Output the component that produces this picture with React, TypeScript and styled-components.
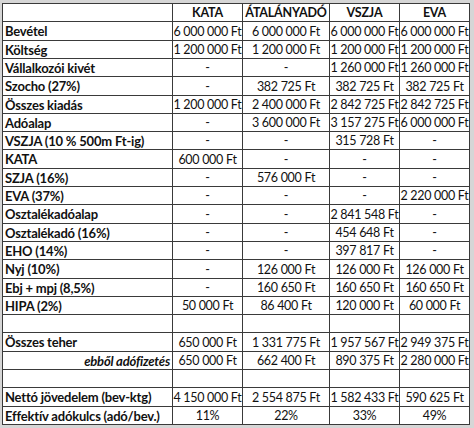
import React from "react";
import styled, { createGlobalStyle } from "styled-components";

const Global = createGlobalStyle`
  html, body { margin: 0; padding: 0; background: #d6d6d6; }
  body { width: 474px; height: 428px; overflow: hidden; }
`;

const Sheet = styled.div`
  margin: 3px 0 0 2px;
  display: grid;
  grid-template-columns: 170px 70px 87px 70px 70px;
  grid-template-rows: 18px 19px 18px 18px 19px 18px 18px 18px 19px 18px 18px 19px 18px 18px 19px 18px 18px 18px 19px 18px 18px 19px 18px;
  width: max-content;
  border-top: 1px solid #3a3a3a;
  border-left: 1px solid #3a3a3a;
  background: #ffffff;
  font-family: "Lato", "Liberation Sans", sans-serif;
  color: #111111;
`;

type Kind = "label" | "head" | "data" | "sub";

const Cell = styled.div<{ $kind: Kind }>`
  box-sizing: border-box;
  border-right: 1px solid #3a3a3a;
  border-bottom: 1px solid #3a3a3a;
  display: flex;
  align-items: center;
  white-space: nowrap;
  padding: ${(p) => (p.$kind === "label" || p.$kind === "sub" ? "0 2px" : "0")};
  font-size: ${(p) => (p.$kind === "data" ? "12.5px" : p.$kind === "head" ? "12.5px" : "13px")};
  letter-spacing: ${(p) => (p.$kind === "data" ? "-0.3px" : "-0.2px")};
  justify-content: ${(p) =>
    p.$kind === "label" ? "flex-start" : p.$kind === "sub" ? "flex-end" : "center"};
  font-weight: ${(p) => (p.$kind === "data" ? 400 : 700)};
  font-style: ${(p) => (p.$kind === "sub" ? "italic" : "normal")};
`;

type Row = { label: string; values: string[]; sub?: boolean; head?: boolean };

const rows: Row[] = [
  { label: "", values: ["KATA", "ÁTALÁNYADÓ", "VSZJA", "EVA"], head: true },
  { label: "Bevétel", values: ["6 000 000 Ft", "6 000 000 Ft", "6 000 000 Ft", "6 000 000 Ft"] },
  { label: "Költség", values: ["1 200 000 Ft", "1 200 000 Ft", "1 200 000 Ft", "1 200 000 Ft"] },
  { label: "Vállalkozói kivét", values: ["-", "-", "1 260 000 Ft", "1 260 000 Ft"] },
  { label: "Szocho (27%)", values: ["-", "382 725 Ft", "382 725 Ft", "382 725 Ft"] },
  { label: "Összes kiadás", values: ["1 200 000 Ft", "2 400 000 Ft", "2 842 725 Ft", "2 842 725 Ft"] },
  { label: "Adóalap", values: ["-", "3 600 000 Ft", "3 157 275 Ft", "6 000 000 Ft"] },
  { label: "VSZJA (10 % 500m Ft-ig)", values: ["-", "-", "315 728 Ft", "-"] },
  { label: "KATA", values: ["600 000 Ft", "-", "-", "-"] },
  { label: "SZJA (16%)", values: ["-", "576 000 Ft", "-", "-"] },
  { label: "EVA (37%)", values: ["-", "-", "-", "2 220 000 Ft"] },
  { label: "Osztalékadóalap", values: ["-", "-", "2 841 548 Ft", "-"] },
  { label: "Osztalékadó (16%)", values: ["-", "-", "454 648 Ft", "-"] },
  { label: "EHO (14%)", values: ["-", "-", "397 817 Ft", "-"] },
  { label: "Nyj (10%)", values: ["-", "126 000 Ft", "126 000 Ft", "126 000 Ft"] },
  { label: "Ebj + mpj (8,5%)", values: ["-", "160 650 Ft", "160 650 Ft", "160 650 Ft"] },
  { label: "HIPA (2%)", values: ["50 000 Ft", "86 400 Ft", "120 000 Ft", "60 000 Ft"] },
  { label: "", values: ["", "", "", ""] },
  { label: "Összes teher", values: ["650 000 Ft", "1 331 775 Ft", "1 957 567 Ft", "2 949 375 Ft"] },
  { label: "ebből adófizetés", values: ["650 000 Ft", "662 400 Ft", "890 375 Ft", "2 280 000 Ft"], sub: true },
  { label: "", values: ["", "", "", ""] },
  { label: "Nettó jövedelem (bev-ktg)", values: ["4 150 000 Ft", "2 554 875 Ft", "1 582 433 Ft", "590 625 Ft"] },
  { label: "Effektív adókulcs (adó/bev.)", values: ["11%", "22%", "33%", "49%"] },
];

export default function App() {
  return (
    <>
      <Global />
      <Sheet>
        {rows.map((r, i) => (
          <React.Fragment key={i}>
            <Cell $kind={r.sub ? "sub" : "label"}>{r.label}</Cell>
            {r.values.map((v, j) => (
              <Cell key={j} $kind={r.head ? "head" : "data"}>
                {v}
              </Cell>
            ))}
          </React.Fragment>
        ))}
      </Sheet>
    </>
  );
}
